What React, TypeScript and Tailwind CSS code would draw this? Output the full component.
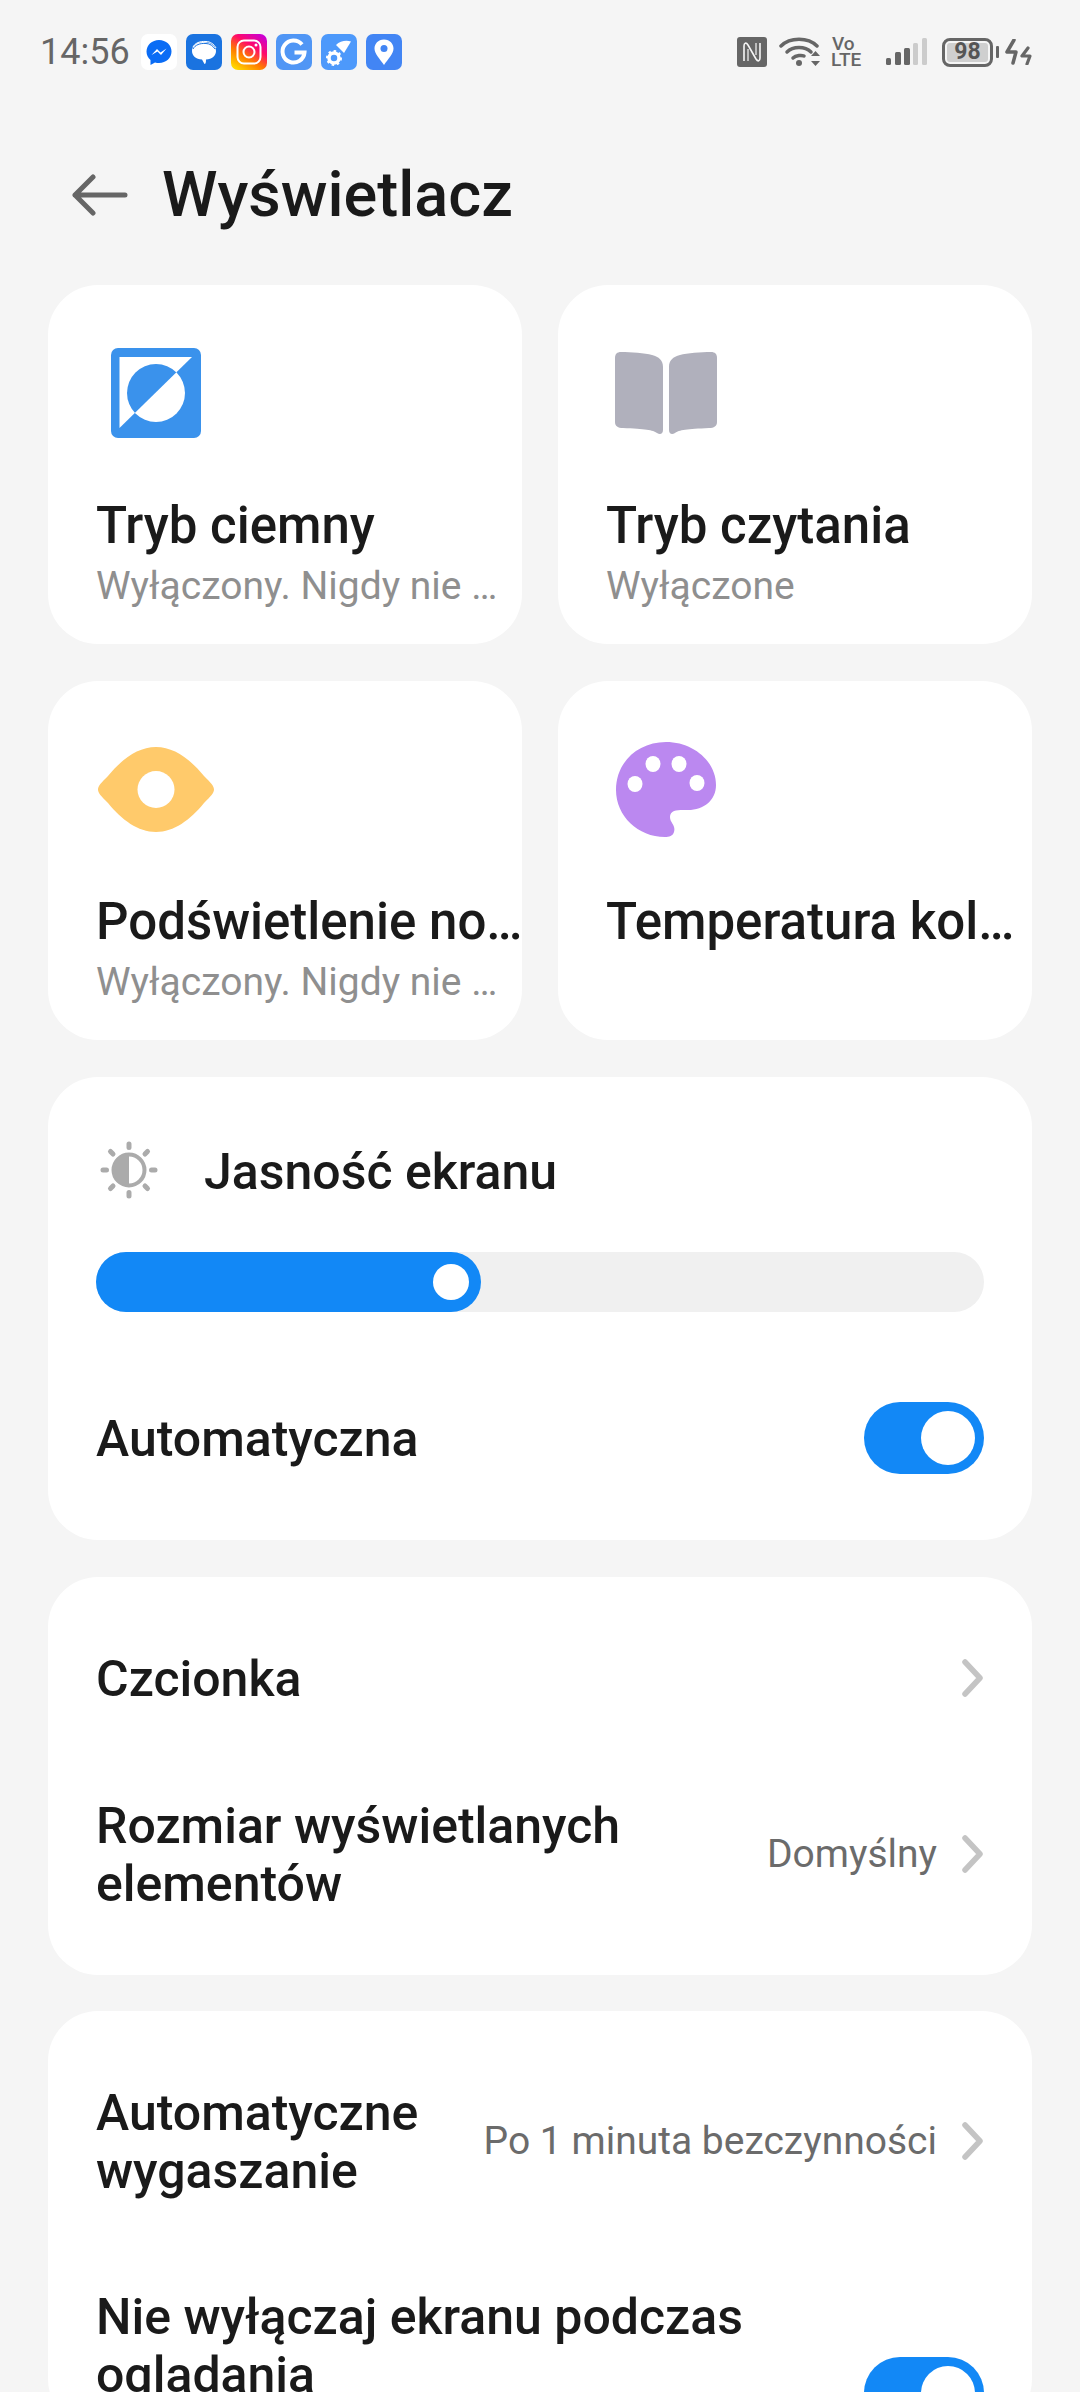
import React from "react";

const Chevron = () => (
  <svg width="21" height="38" viewBox="0 0 21 38" className="shrink-0 mr-[1px]" fill="none" stroke="#c4c4c4" strokeWidth="5.5" strokeLinecap="round" strokeLinejoin="round">
    <path d="M3 3 L18 19 L3 35" />
  </svg>
);

const Toggle = () => (
  <div className="w-[120px] h-[72px] rounded-full bg-[#1288f6] flex items-center justify-end pr-[9px] shrink-0">
    <div className="w-[54px] h-[54px] rounded-full bg-white" />
  </div>
);

const AppIcon = ({ children }: { children: React.ReactNode }) => (
  <svg width="36" height="36" viewBox="0 0 36 36" className="shrink-0">{children}</svg>
);

const StatusApps = () => (
  <div className="flex gap-[9px] ml-[11px]">
    <AppIcon>
      <rect width="36" height="36" rx="7" fill="#fff" />
      <path d="M18 6C11 6 5.500 11 5.500 17.500C5.500 21 7 24 9.500 26V31L14 28.500C15.500 29 16.500 29 18 29C25 29 30.500 24 30.500 17.500C30.500 11 25 6 18 6Z" fill="#0a6cf5" />
      <path d="M10.500 21L16 15L19.500 18.500L25.500 14.500L20 21L16.500 17.500Z" fill="#fff" />
    </AppIcon>
    <AppIcon>
      <rect width="36" height="36" rx="7" fill="#1a73e0" />
      <path d="M17 8C10 8 6 12 6 17C6 22 10 25 16 25.500L18.500 30C19.500 30 20 29 20 25.500C26 25 30 22 30 17C30 12 25 8 17 8Z" fill="#fff" />
      <path d="M7 13C9 9 14 7 20 7.500C24 7.500 28 10 30 14" fill="none" stroke="#fff" strokeWidth="1" />
      <path d="M7 15C9 11 14 9 20 9.500C24 9.500 27 12 29 15" fill="none" stroke="#1a73e0" strokeWidth="1" />
    </AppIcon>
    <AppIcon>
      <defs>
        <linearGradient id="ig" x1="0.2" y1="1" x2="0.85" y2="0">
          <stop offset="0" stopColor="#ffd600" />
          <stop offset="0.35" stopColor="#ff7a00" />
          <stop offset="0.65" stopColor="#ff0a69" />
          <stop offset="1" stopColor="#c800d8" />
        </linearGradient>
      </defs>
      <rect width="36" height="36" rx="7" fill="url(#ig)" />
      <rect x="6.500" y="6.500" width="23" height="23" rx="6.500" fill="none" stroke="#fff" strokeWidth="2" />
      <circle cx="18" cy="18" r="5.500" fill="none" stroke="#fff" strokeWidth="2" />
      <circle cx="25" cy="11" r="1.500" fill="#fff" />
    </AppIcon>
    <AppIcon>
      <rect width="36" height="36" rx="7" fill="#5096f5" />
      <path d="M26 10.500A11 11 0 1 0 28.500 18.500H18.500" fill="none" stroke="#fff" strokeWidth="4" />
    </AppIcon>
    <AppIcon>
      <rect width="36" height="36" rx="7" fill="#4d99fb" />
      <path d="M15 11C19 7 25 6 30 7.500L23 19Z" fill="#fff" />
      <circle cx="13" cy="24" r="5" fill="none" stroke="#fff" strokeWidth="3.500" />
      <circle cx="13" cy="24" r="7" fill="none" stroke="#fff" strokeWidth="2" strokeDasharray="2.500 2.900" />
    </AppIcon>
    <AppIcon>
      <rect width="36" height="36" rx="7" fill="#4285f4" />
      <path d="M18 5.500C12 5.500 8.500 10 8.500 14.500C8.500 20 14 25 18 31C22 25 27.500 20 27.500 14.500C27.500 10 24 5.500 18 5.500Z" fill="#fff" />
      <circle cx="18" cy="14.500" r="3.500" fill="#4285f4" />
    </AppIcon>
  </div>
);

const StatusRight = () => (
  <div className="flex items-center ml-auto mr-[47px] text-[#666]">
    <svg width="30" height="30" viewBox="0 0 30 30" className="shrink-0">
      <rect width="30" height="30" rx="3" fill="#666" />
      <path d="M7 24V9C7 6 9 5 11 8L19 22C21 25 23 24 23 21V6" fill="none" stroke="#f5f5f5" strokeWidth="1.600" />
      <path d="M11 12V24M19 6V18" fill="none" stroke="#f5f5f5" strokeWidth="1.200" />
    </svg>
    <svg width="42" height="32" viewBox="0 0 42 32" className="ml-[12px] shrink-0">
      <path d="M2 10C11 1 29 1 38 10" fill="none" stroke="#666" strokeWidth="3.500" strokeLinecap="round" />
      <path d="M8 16C14 10 26 10 32 16" fill="none" stroke="#666" strokeWidth="3.500" strokeLinecap="round" />
      <path d="M14 22C17 19 23 19 25 20" fill="none" stroke="#666" strokeWidth="3.500" strokeLinecap="round" />
      <circle cx="20" cy="27" r="3" fill="#666" />
      <path d="M32 20L36.500 15L41 20ZM32 25H41L36.500 30Z" fill="#666" />
    </svg>
    <div className="ml-[10px] w-[34px] flex flex-col items-start text-[19px] leading-[16px] font-medium shrink-0">
      <span className="pl-[1px]">Vo</span>
      <span>LTE</span>
    </div>
    <svg width="42" height="28" viewBox="0 0 42 28" className="ml-[21px] shrink-0">
      <rect x="0" y="20" width="5" height="7" rx="1.500" fill="#666" />
      <rect x="9" y="14" width="6" height="13" rx="1.500" fill="#666" />
      <rect x="18" y="10" width="6" height="17" rx="1.500" fill="#666" />
      <rect x="27" y="5" width="5" height="22" rx="1.500" fill="#ccc" />
      <rect x="36" y="0" width="5" height="27" rx="1.500" fill="#ccc" />
    </svg>
    <div className="ml-[14px] w-[51px] h-[29px] rounded-[8px] border-[3px] border-[#666] p-[2px] shrink-0">
      <div className="w-[41px] h-[19px] rounded-[3px] bg-[#cfcfcf] flex items-center justify-center text-[23px] font-bold text-[#555]">98</div>
    </div>
    <div className="ml-[3px] w-[3px] h-[12px] rounded-[1px] bg-[#666] shrink-0" />
    <svg width="28" height="26" viewBox="0 0 28 26" className="ml-[6px] shrink-0">
      <path d="M9 1L2 13H11L8 24" fill="none" stroke="#666" strokeWidth="3.500" strokeLinejoin="round" strokeLinecap="round" />
      <path d="M23 9L17 17H25L22 25" fill="none" stroke="#666" strokeWidth="3.200" strokeLinejoin="round" strokeLinecap="round" />
    </svg>
  </div>
);

const MoonIcon = () => (
  <svg width="90" height="90" viewBox="0 0 90 90">
    <defs>
      <clipPath id="tri"><polygon points="8.500,9 81,9 8.500,80" /></clipPath>
    </defs>
    <rect width="90" height="90" rx="7" fill="#3a92ec" />
    <polygon points="8.500,9 81,9 8.500,80" fill="#fff" />
    <circle cx="45" cy="45" r="29" fill="#fff" />
    <circle cx="45" cy="45" r="29" fill="#3a92ec" clipPath="url(#tri)" />
  </svg>
);

const BookIcon = () => (
  <svg width="102" height="82" viewBox="0 0 102 82">
    <path d="M6 0C16 0 30 1 37 3C44 5 48 8 48 15V78C48 82 45 83 42 81C38 78 30 77 8 76C3 76 0 74 0 70V6C0 2 2 0 6 0Z" fill="#b0b0bc" />
    <path d="M96 0C86 0 72 1 65 3C58 5 54 8 54 15V78C54 82 57 83 60 81C64 78 72 77 94 76C99 76 102 74 102 70V6C102 2 100 0 96 0Z" fill="#b0b0bc" />
  </svg>
);

const EyeIcon = () => (
  <svg width="116" height="85" viewBox="0 0 116 85">
    <path d="M58 0C76 0 92 12 106 29C113 36 116 39 116 42.500C116 46 113 49 106 56C92 73 76 85 58 85C40 85 24 73 10 56C3 49 0 46 0 42.500C0 39 3 36 10 29C24 12 40 0 58 0Z" fill="#ffca6b" />
    <circle cx="58" cy="42.500" r="18.500" fill="#fff" />
  </svg>
);

const PaletteIcon = () => (
  <svg width="100" height="95" viewBox="0 0 100 95">
    <path d="M50 0C78 0 100 20 100 43C100 58 88 68 72 68C64 68 54 67 54 75C54 81 60 83 58 90C57 94 53 95 49 95C22 95 0 74 0 48C0 20 22 0 50 0Z" fill="#bb88f0" />
    <ellipse cx="37" cy="22" rx="7.500" ry="8" fill="#fff" />
    <ellipse cx="63" cy="22" rx="7.500" ry="8" fill="#fff" />
    <ellipse cx="19" cy="42" rx="7.500" ry="8" fill="#fff" />
    <ellipse cx="81" cy="41" rx="7.500" ry="8" fill="#fff" />
  </svg>
);

const SunIcon = () => (
  <svg width="58" height="58" viewBox="0 0 58 58" className="shrink-0">
    <circle cx="29" cy="29" r="15.500" fill="none" stroke="#ababab" strokeWidth="4" />
    <path d="M29 13.500A15.500 15.500 0 0 0 29 44.500Z" fill="#ababab" />
    <g stroke="#ababab" strokeWidth="5" strokeLinecap="round">
      <path d="M29 3V6.500M29 51.500V55M3 29H6.500M51.500 29H55M10.500 10.500L13 13M45 45L47.500 47.500M47.500 10.500L45 13M13 45L10.500 47.500" />
    </g>
  </svg>
);

const Tile = ({ icon, title, sub }: { icon: React.ReactNode; title: string; sub?: string }) => (
  <div className="bg-white rounded-[50px] h-[359px] pt-[30px] pl-[48px] min-w-0">
    <div className="w-[120px] h-[156px] flex items-center justify-center">{icon}</div>
    <div className="mt-[26px] -mr-[6px] text-[51px] leading-[58px] font-medium text-[#1a1a1a] truncate">{title}</div>
    {sub && <div className="mt-[6px] text-[39px] leading-[50px] text-[#8f8f8f] truncate pr-[24px]">{sub}</div>}
  </div>
);

const Row = ({ label, value, className }: { label: string; value?: string; className?: string }) => (
  <div className={"flex items-center py-[33px] " + (className ?? "")}>
    <div className="flex-1 min-w-0 text-[50px] leading-[58px] font-medium text-[#1a1a1a] pt-[2px]">{label}</div>
    {value && <div className="text-[39px] text-[#6b6b6b] mr-[25px] ml-[40px] shrink-0">{value}</div>}
    <Chevron />
  </div>
);

export default function App() {
  return (
    <div className="w-[1080px] h-[2392px] overflow-hidden bg-[#f5f5f5]" style={{ fontFamily: "Roboto, sans-serif" }}>
      <div className="h-[104px] flex items-center pl-[40px]">
        <span className="text-[36px] text-[#666] leading-none">14:56</span>
        <StatusApps />
        <StatusRight />
      </div>

      <div className="mt-[51px] h-[80px] mb-[50px] flex items-center pl-[72px]">
        <svg width="58" height="44" viewBox="0 0 58 44" className="shrink-0" fill="none" stroke="#666" strokeWidth="5" strokeLinecap="round" strokeLinejoin="round">
          <path d="M53 22H3M21 4L3 22L21 40" />
        </svg>
        <h1 className="ml-[32px] text-[63px] leading-[80px] font-medium text-[#1a1a1a]">Wyświetlacz</h1>
      </div>

      <div className="px-[48px]">
        <div className="grid grid-cols-2 gap-x-[36px] gap-y-[37px]">
          <Tile icon={<MoonIcon />} title="Tryb ciemny" sub="Wyłączony. Nigdy nie włączać" />
          <Tile icon={<BookIcon />} title="Tryb czytania" sub="Wyłączone" />
          <Tile icon={<EyeIcon />} title="Podświetlenie nocne" sub="Wyłączony. Nigdy nie włączać" />
          <Tile icon={<PaletteIcon />} title="Temperatura kolorów" />
        </div>

        <div className="mt-[37px] bg-white rounded-[50px] px-[48px] pt-[64px] pb-[66px]">
          <div className="flex items-center h-[58px] pl-[4px]">
            <SunIcon />
            <span className="ml-[46px] text-[50px] font-medium text-[#1a1a1a] pt-[5px]">Jasność ekranu</span>
          </div>
          <div className="mt-[53px] h-[60px] rounded-full bg-[#f0f0f0]">
            <div className="w-[385px] h-full rounded-full bg-[#1288f6] flex items-center justify-end pr-[12px]">
              <div className="w-[36px] h-[36px] rounded-full bg-white" />
            </div>
          </div>
          <div className="mt-[90px] flex items-center justify-between">
            <span className="text-[50px] leading-[58px] font-medium text-[#1a1a1a] pt-[2px]">Automatyczna</span>
            <Toggle />
          </div>
        </div>

        <div className="mt-[37px] bg-white rounded-[50px] px-[48px] pt-[38px] pb-[29px] flex flex-col gap-[21px]">
          <Row label="Czcionka" />
          <Row label="Rozmiar wyświetlanych elementów" value="Domyślny" />
        </div>

        <div className="mt-[36px] bg-white rounded-[50px] px-[48px] pt-[38px] flex flex-col gap-[21px]">
          <Row label="Automatyczne wygaszanie" value="Po 1 minuta bezczynności" />
          <div className="flex items-start pt-[34px]">
            <div className="flex-1 min-w-0 text-[50px] leading-[58px] font-medium text-[#1a1a1a] pr-[100px]">Nie wyłączaj ekranu podczas oglądania</div>
            <div className="mt-[69px]"><Toggle /></div>
          </div>
        </div>
      </div>
    </div>
  );
}
